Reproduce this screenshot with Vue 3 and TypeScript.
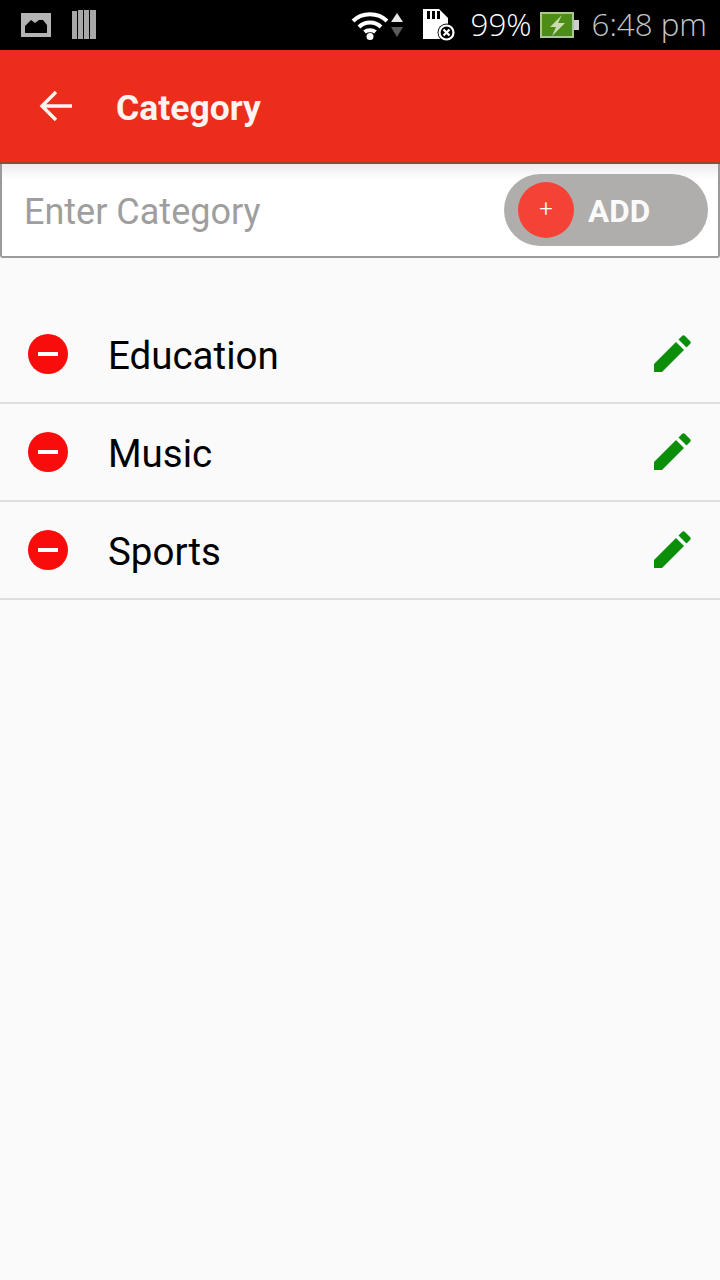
<template>
  <div class="screen">
    <div class="status">
      <svg class="ic-photo" width="30" height="24" viewBox="0 0 30 24">
        <rect width="30" height="24" fill="#b4b4b4" />
        <path d="M4 20V13L10 7L14 10L18 7L22 7L26 12V20Z" fill="#000" />
      </svg>
      <svg class="ic-bars" width="24" height="30" viewBox="0 0 24 30">
        <path d="M0 1H5V29H0ZM6 0H11V29H6ZM12 0H17V29H12ZM18 0H24V29H18Z" fill="#a8a8a8" />
      </svg>
      <span class="status__spacer" />
      <svg class="ic-wifi" width="38" height="30" viewBox="0 0 38 30">
        <path d="M2 11C11 2 27 2 36 11M8 17C14 11 24 11 30 17M13.500 22C16.500 19.500 21.500 19.500 24.500 22" fill="none" stroke="#fff" stroke-width="4" />
        <circle cx="19" cy="26.500" r="3.500" fill="#fff" />
      </svg>
      <svg class="ic-arrows" width="12" height="26" viewBox="0 0 12 26">
        <path d="M6 1L12 10H0Z" fill="#e8e8e8" />
        <path d="M0 15H12L6 25Z" fill="#5c5c5c" />
      </svg>
      <svg class="ic-sd" width="33" height="32" viewBox="0 0 33 32">
        <path d="M1 0H17L26 9V30H1Z" fill="#fff" />
        <path d="M5 2H8V10H5ZM10 2H13V10H10ZM15 2H18V10H15Z" fill="#000" />
        <circle cx="24.500" cy="23.500" r="9" fill="#000" />
        <circle cx="24.500" cy="23.500" r="7" fill="none" stroke="#fff" stroke-width="2.200" />
        <path d="M21.500 20.500L27.500 26.500M27.500 20.500L21.500 26.500" stroke="#fff" stroke-width="2.200" />
      </svg>
      <span class="status__pct">99%</span>
      <svg class="ic-batt" width="40" height="26" viewBox="0 0 40 26">
        <rect x="1" y="1" width="32" height="24" fill="#4d8c15" stroke="#a9c98d" stroke-width="2" />
        <rect x="34" y="8" width="5" height="10" fill="#cfcfcf" />
        <path d="M22 3L10 15H16L12 24L25 11H18Z" fill="#c9dcb2" />
      </svg>
      <span class="status__time">6:48 pm</span>
    </div>

    <div class="toolbar">
      <svg class="toolbar__back" width="34" height="32" viewBox="0 0 34 32">
        <path d="M33 16H3M17 2L3 16L17 30" fill="none" stroke="#fdf3f1" stroke-width="3.400" />
      </svg>
      <span class="toolbar__title">Category</span>
    </div>

    <div class="entry">
      <span class="entry__hint">Enter Category</span>
      <button class="add">
        <span class="add__dot">+</span>
        <span class="add__label">ADD</span>
      </button>
    </div>

    <div class="list">
      <div v-for="name in categories" :key="name" class="row">
        <span class="row__remove"><span class="row__minus" /></span>
        <span class="row__name">{{ name }}</span>
        <svg class="row__edit" width="38" height="38" viewBox="0 0 38 38">
          <path d="M1 37V29L23 7L31 15L9 37Z" fill="#0b8f0b" />
          <path d="M25.500 4.500L29 1C30 0 31 0 32 1L37 6C38 7 38 8 37 9L33.500 12.500Z" fill="#0b8f0b" />
        </svg>
      </div>
    </div>
  </div>
</template>

<script setup lang="ts">
const categories: string[] = ['Education', 'Music', 'Sports'];
</script>

<style>
html,
body {
  margin: 0;
  background: #fafafa;
}
</style>

<style scoped>
.screen {
  width: 720px;
  height: 1280px;
  background: #fafafa;
  overflow: hidden;
  font-family: Roboto, sans-serif;
}
.status {
  height: 50px;
  background: #000;
  display: flex;
  align-items: center;
  padding: 0 13px 0 21px;
  box-sizing: border-box;
}
.status__spacer {
  flex: 1;
}
.ic-bars {
  margin-left: 21px;
}
.ic-arrows {
  margin-left: 2px;
}
.ic-sd {
  margin-left: 19px;
}
.status__pct {
  margin-left: 16px;
  font: 300 31.300px "Open Sans", sans-serif;
  color: #fff;
  margin-top: -2px;
}
.ic-batt {
  margin-left: 8px;
}
.status__time {
  margin-left: 12px;
  font: 300 31.300px "Open Sans", sans-serif;
  color: #c4c4c4;
  margin-top: -2px;
}
.toolbar {
  height: 114px;
  background: #ec2d1c;
  display: flex;
  align-items: center;
  padding-left: 39px;
  box-sizing: border-box;
  border-bottom: 2px solid #8c4a40;
}
.toolbar__title {
  margin-left: 43px;
  margin-top: 3px;
  font-size: 35.500px;
  font-weight: 700;
  color: #fdf3f1;
}
.entry {
  height: 94px;
  box-sizing: border-box;
  border: 2px solid #9a9a9a;
  border-top: none;
  border-radius: 0 0 3px 3px;
  background: linear-gradient(#ececec, #fff 16px);
  display: flex;
  align-items: center;
  justify-content: space-between;
  padding: 0 10px 0 23px;
}
.entry__hint {
  font-size: 36px;
  color: #9e9e9e;
  margin-left: -1px;
  margin-top: 4px;
}
.add {
  width: 204px;
  height: 72px;
  border: none;
  border-radius: 36px;
  background: #b0aeac;
  display: flex;
  align-items: center;
  padding: 0 0 0 14px;
  font-family: inherit;
}
.add__dot {
  width: 56px;
  height: 56px;
  border-radius: 50%;
  background: #f44336;
  color: #fff;
  font-size: 24px;
  font-weight: 300;
  line-height: 54px;
  text-align: center;
}
.add__label {
  margin-left: 14px;
  margin-top: 2px;
  font-size: 31.500px;
  font-weight: 700;
  color: #fafafa;
}
.list {
  padding-top: 48px;
}
.row {
  height: 98px;
  box-sizing: border-box;
  border-bottom: 2px solid #dedede;
  display: flex;
  align-items: center;
  padding: 0 28px;
}
.row__remove {
  width: 40px;
  height: 40px;
  border-radius: 50%;
  background: #f80c0c;
  display: flex;
  align-items: center;
  justify-content: center;
}
.row__minus {
  width: 20px;
  height: 4px;
  background: #fff;
}
.row__name {
  margin-left: 40px;
  flex: 1;
  font-size: 38.500px;
  color: #000;
  margin-top: 2px;
}
.row__edit {
  margin-right: 1px;
}
</style>
